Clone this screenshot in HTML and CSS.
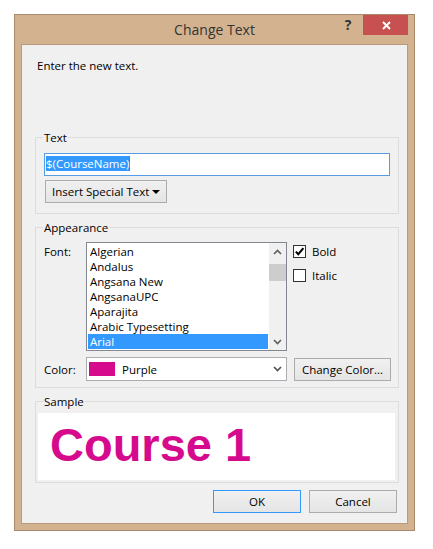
FILE: index.html
```html
<!DOCTYPE html>
<html>
<head>
<meta charset="utf-8">
<title>Change Text</title>
<link rel="stylesheet" href="styles.css">
</head>
<body>
<div class="window">
  <div class="titlebar">
    <span class="title">Change Text</span>
    <div class="controls">
      <span class="help">?</span>
      <span class="close"><svg width="9" height="9" viewBox="0 0 9 9"><path d="M1 1L8 8M8 1L1 8" stroke="#fff" stroke-width="1.9" fill="none"/></svg></span>
    </div>
  </div>
  <div class="client">
    <p class="prompt">Enter the new text.</p>
    <fieldset class="group">
      <legend>Text</legend>
      <div class="textbox"><span class="sel">$(CourseName)</span></div>
      <button class="btn btn-insert"><span>Insert Special Text</span><span class="tri"></span></button>
    </fieldset>
    <fieldset class="group group-appearance">
      <legend>Appearance</legend>
      <div class="row font-row">
        <span class="lbl lbl-font">Font:</span>
        <div class="listbox">
          <ul class="items">
            <li>Algerian</li>
            <li>Andalus</li>
            <li>Angsana New</li>
            <li>AngsanaUPC</li>
            <li>Aparajita</li>
            <li>Arabic Typesetting</li>
            <li class="selected">Arial</li>
          </ul>
          <div class="scrollbar">
            <div class="sb-btn"><svg width="9" height="6" viewBox="0 0 9 6"><path d="M1 5L4.5 1.5L8 5" stroke="#606060" stroke-width="1.7" fill="none"/></svg></div>
            <div class="sb-track"><div class="sb-thumb"></div></div>
            <div class="sb-btn"><svg width="9" height="6" viewBox="0 0 9 6"><path d="M1 1L4.5 4.5L8 1" stroke="#606060" stroke-width="1.7" fill="none"/></svg></div>
          </div>
        </div>
        <div class="checks">
          <label class="check"><span class="box"><svg width="11" height="11" viewBox="0 0 11 11"><path d="M1.8 5.6L4.3 8.2L9.4 2.2" stroke="#000" stroke-width="2" fill="none"/></svg></span><span>Bold</span></label>
          <label class="check"><span class="box"></span><span>Italic</span></label>
        </div>
      </div>
      <div class="row color-row">
        <span class="lbl lbl-color">Color:</span>
        <div class="combo">
          <span class="swatch"></span>
          <span class="combo-text">Purple</span>
          <svg class="chev" width="9" height="6" viewBox="0 0 9 6"><path d="M1 1L4.5 4.5L8 1" stroke="#555" stroke-width="1.7" fill="none"/></svg>
        </div>
        <button class="btn btn-change">Change Color...</button>
      </div>
    </fieldset>
    <fieldset class="group group-sample">
      <legend>Sample</legend>
      <div class="sample">Course 1</div>
    </fieldset>
    <div class="actions">
      <button class="btn btn-action btn-default">OK</button>
      <button class="btn btn-action">Cancel</button>
    </div>
  </div>
</div>
</body>
</html>
```

FILE: styles.css
```css
html, body {
  margin: 0;
  padding: 0;
  background: #ffffff;
}

body {
  font-family: "Open Sans", "Noto Sans", sans-serif;
  font-size: 11.5px;
  color: #000;
}

.window {
  box-sizing: border-box;
  margin: 14px 0 0 14px;
  width: 401px;
  height: 517px;
  border: 1px solid #a88b6d;
  background: #d3b38f;
  display: flex;
  flex-direction: column;
}

.titlebar {
  height: 29px;
  flex: none;
  display: grid;
  grid-template-columns: 1fr auto 1fr;
  align-items: start;
}

.title {
  grid-column: 2;
  margin-top: 5px;
  font-size: 14px;
  line-height: 19px;
  color: #333;
}

.controls {
  grid-column: 3;
  justify-self: end;
  display: flex;
  margin-right: 6px;
}

.help {
  width: 24px;
  height: 20px;
  margin-right: 3px;
  text-align: center;
  font-weight: bold;
  font-size: 14px;
  line-height: 20px;
  color: #333;
}

.close {
  box-sizing: border-box;
  width: 45px;
  height: 20px;
  background: #c75050;
  display: flex;
  align-items: center;
  justify-content: center;
  padding: 1px 0 0 2px;
}

.close svg { display: block; }

.client {
  box-sizing: border-box;
  flex: none;
  height: 480px;
  margin: 0 6px;
  border: 1px solid #b89b7c;
  background: #f0f0f0;
  overflow: hidden;
}

.prompt {
  margin: 13px 0 0 15px;
  line-height: 15px;
}

.group {
  margin: 6px 8px 0 13px;
  padding: 0;
  border: 1px solid #dcdcdc;
  min-width: 0;
}

.group:first-of-type {
  margin-top: 57px;
}

.group legend {
  margin-left: 7px;
  padding: 0 1px;
  line-height: 15px;
}

.textbox {
  box-sizing: border-box;
  margin: 8px 8px 0 8px;
  height: 23px;
  border: 1px solid #569de5;
  background: #fff;
  padding: 2px 1px;
  line-height: 15px;
  white-space: nowrap;
}

.sel {
  display: inline-block;
  height: 15px;
  background: #3399ff;
  color: #fff;
  padding: 0 1px 0 0;
  box-shadow: inset -1px 0 0 #cc6600;
}

.btn {
  box-sizing: border-box;
  height: 23px;
  border: 1px solid #acacac;
  background: linear-gradient(#f0f0f0, #e5e5e5);
  font-family: inherit;
  font-size: inherit;
  line-height: 15px;
  color: #000;
  padding: 0;
  margin: 0;
}

.btn-insert {
  display: flex;
  align-items: center;
  width: 122px;
  margin: 4px 0 10px 9px;
  padding: 0 6px 0 6px;
}

.tri {
  margin-left: auto;
  width: 0;
  height: 0;
  border-left: 4px solid transparent;
  border-right: 4px solid transparent;
  border-top: 4px solid #000;
}

.row {
  display: flex;
  align-items: flex-start;
  margin-left: 8px;
}

.font-row { margin-top: 7px; }

.lbl {
  width: 42px;
  flex: none;
  line-height: 15px;
}

.lbl-font { margin-top: 2px; }

.listbox {
  box-sizing: border-box;
  width: 201px;
  height: 109px;
  border: 1px solid #828790;
  background: #fff;
  display: flex;
}

.items {
  list-style: none;
  margin: 0;
  padding: 1px;
  width: 182px;
  box-sizing: border-box;
}

.items li {
  width: 180px;
  height: 15px;
  line-height: 15px;
  padding-left: 2px;
  box-sizing: border-box;
  white-space: nowrap;
}

.items li.selected {
  background: #3399ff;
  color: #fff;
}

.scrollbar {
  width: 17px;
  background: #f0f0f0;
  display: flex;
  flex-direction: column;
}

.sb-btn {
  height: 17px;
  display: flex;
  align-items: center;
  justify-content: center;
}

.sb-btn svg { display: block; }

.sb-track { flex: 1; }

.sb-thumb {
  margin-top: 4px;
  height: 17px;
  background: #cdcdcd;
}

.checks {
  display: flex;
  flex-direction: column;
  gap: 11px;
  margin: 3px 0 0 6px;
}

.check {
  display: flex;
  align-items: center;
  gap: 6px;
  height: 13px;
  line-height: 15px;
}

.box {
  box-sizing: border-box;
  width: 13px;
  height: 13px;
  border: 1px solid #333;
  background: #fff;
  display: flex;
  align-items: center;
  justify-content: center;
}

.box svg { display: block; }

.color-row {
  margin-top: 6px;
  margin-bottom: 6px;
}

.lbl-color {
  align-self: center;
}

.combo {
  box-sizing: border-box;
  width: 201px;
  height: 24px;
  border: 1px solid #abadb3;
  background: #fff;
  display: flex;
  align-items: center;
  padding: 0 4px 0 2px;
}

.swatch {
  width: 26px;
  height: 14px;
  background: #d60a8c;
  flex: none;
}

.combo-text {
  margin-left: 7px;
  line-height: 15px;
}

.chev {
  margin-left: auto;
  display: block;
}

.btn-change {
  width: 97px;
  margin: 1px 0 0 7px;
}

.sample {
  box-sizing: border-box;
  height: 67px;
  margin: 4px 3px 2px 2px;
  background: #fff;
  padding: 4px 0 0 12px;
  font-family: "Liberation Sans", Arial, sans-serif;
  font-weight: bold;
  font-size: 47px;
  line-height: 56px;
  color: #d60a8c;
  white-space: nowrap;
  overflow: hidden;
}

.actions {
  display: flex;
  justify-content: flex-end;
  gap: 8px;
  margin: 7px 10px 0 0;
}

.btn-action {
  width: 88px;
}

.btn-default {
  border-color: #3399ff;
}
```
